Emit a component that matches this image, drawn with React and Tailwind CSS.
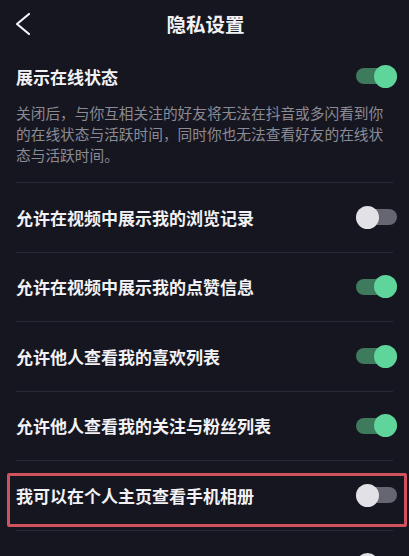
import React from "react";

function Toggle({ on }) {
  return (
    <div className="relative w-[41px] h-[23px] shrink-0 flex items-center">
      <div
        className={
          "w-full h-[16px] rounded-full " + (on ? "bg-[#3e7a5c]" : "bg-[#666672]")
        }
      />
      <div
        className={
          "absolute top-0 w-[23px] h-[23px] rounded-full " +
          (on ? "right-0 bg-[#5fd49b]" : "left-0 bg-[#e1e1e6]")
        }
      />
    </div>
  );
}

function Row({ label, on, highlight }) {
  return (
    <div className="relative mx-4 h-[69.5px] border-t border-[#2a2a37] flex items-center justify-between">
      <span className="text-[17px] font-bold text-[#f2f2f4] leading-none">{label}</span>
      <div className="-mr-[4px]">
        <Toggle on={on} />
      </div>
      {highlight && (
        <div className="absolute left-[-9px] right-[-14px] top-[12px] h-[54px] border-[3px] border-[#cf525c] rounded-[2px] pointer-events-none" />
      )}
    </div>
  );
}

export default function App() {
  const rows = [
    { label: "允许在视频中展示我的浏览记录", on: false },
    { label: "允许在视频中展示我的点赞信息", on: true },
    { label: "允许他人查看我的喜欢列表", on: true },
    { label: "允许他人查看我的关注与粉丝列表", on: true },
    { label: "我可以在个人主页查看手机相册", on: false, highlight: true },
    { label: "允许将我推荐给可能认识的人", on: false },
  ];
  return (
    <div
      className="w-full h-[556px] overflow-hidden bg-[#161621] text-white"
      style={{ fontFamily: '"Noto Sans CJK SC", "Noto Sans", sans-serif' }}
    >
      <div className="h-[48px] grid grid-cols-[1fr_auto_1fr] items-center">
        <div className="pl-[15px] flex items-center">
          <svg width="18" height="24" viewBox="0 0 18 24" fill="none">
            <polyline
              points="14,2 2,12 14,22"
              stroke="#f4f4f6"
              strokeWidth="2.2"
              strokeLinecap="round"
              strokeLinejoin="round"
            />
          </svg>
        </div>
        <div className="text-[19.5px] font-bold text-[#f2f2f4] leading-none pl-[2px]">隐私设置</div>
        <div />
      </div>

      <div className="px-4 pt-[16px] pb-[17px]">
        <div className="h-[24px] flex items-center justify-between">
          <span className="text-[17px] font-bold text-[#f2f2f4] leading-none">展示在线状态</span>
          <div className="-mr-[4px]">
            <Toggle on={true} />
          </div>
        </div>
        <p className="mt-[14px] text-[14.7px] leading-[21px] text-[#8b8b94]">
          关闭后，与你互相关注的好友将无法在抖音或多闪看到你的在线状态与活跃时间，同时你也无法查看好友的在线状态与活跃时间。
        </p>
      </div>

      {rows.map((r) => (
        <Row key={r.label} {...r} />
      ))}
    </div>
  );
}
